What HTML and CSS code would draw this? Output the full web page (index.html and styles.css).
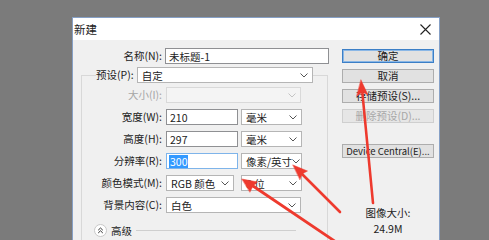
FILE: index.html
```html
<!DOCTYPE html>
<html lang="zh-CN">
<head>
    <meta charset="UTF-8">
    <title>新建</title>
    <link rel="stylesheet" href="styles.css">
</head>
<body>
    <div class="dialog">
        <div class="titlebar">
            <span class="title">新建</span>
            <svg class="close" width="11" height="11" viewBox="0 0 11 11"><path d="M0.5 0.5 L10.5 10.5 M10.5 0.5 L0.5 10.5" stroke="#222" stroke-width="1.1" fill="none"/></svg>
        </div>
        <div class="content">
            <div class="form">
                <div class="row name-row">
                    <span class="lbl lbl-outer">名称(N):</span>
                    <div class="input name-input">未标题-1</div>
                </div>
                <fieldset class="group">
                    <legend class="preset-row">
                        <span class="preset-lbl">预设(P):</span>
                        <div class="select preset"><span>自定</span><svg class="chev" width="8" height="5" viewBox="0 0 8 5"><path d="M0.5 0.5 L4 4 L7.5 0.5" stroke="#555" fill="none"/></svg></div>
                    </legend>
                    <div class="row first">
                        <span class="lbl disabled">大小(I):</span>
                        <div class="select full off"><span></span><svg class="chev" width="8" height="5" viewBox="0 0 8 5"><path d="M0.5 0.5 L4 4 L7.5 0.5" stroke="#c4c4c4" fill="none"/></svg></div>
                    </div>
                    <div class="row">
                        <span class="lbl">宽度(W):</span>
                        <div class="input num">210</div>
                        <div class="select unit"><span>毫米</span><svg class="chev" width="8" height="5" viewBox="0 0 8 5"><path d="M0.5 0.5 L4 4 L7.5 0.5" stroke="#555" fill="none"/></svg></div>
                    </div>
                    <div class="row">
                        <span class="lbl">高度(H):</span>
                        <div class="input num">297</div>
                        <div class="select unit"><span>毫米</span><svg class="chev" width="8" height="5" viewBox="0 0 8 5"><path d="M0.5 0.5 L4 4 L7.5 0.5" stroke="#555" fill="none"/></svg></div>
                    </div>
                    <div class="row">
                        <span class="lbl">分辨率(R):</span>
                        <div class="input num focus"><span class="sel">300</span></div>
                        <div class="select unit"><span>像素/英寸</span><svg class="chev" width="8" height="5" viewBox="0 0 8 5"><path d="M0.5 0.5 L4 4 L7.5 0.5" stroke="#555" fill="none"/></svg></div>
                    </div>
                    <div class="row">
                        <span class="lbl">颜色模式(M):</span>
                        <div class="select mode"><span>RGB 颜色</span><svg class="chev" width="8" height="5" viewBox="0 0 8 5"><path d="M0.5 0.5 L4 4 L7.5 0.5" stroke="#555" fill="none"/></svg></div>
                        <div class="select unit"><span>8 位</span><svg class="chev" width="8" height="5" viewBox="0 0 8 5"><path d="M0.5 0.5 L4 4 L7.5 0.5" stroke="#555" fill="none"/></svg></div>
                    </div>
                    <div class="row">
                        <span class="lbl">背景内容(C):</span>
                        <div class="select full"><span>白色</span><svg class="chev" width="8" height="5" viewBox="0 0 8 5"><path d="M0.5 0.5 L4 4 L7.5 0.5" stroke="#555" fill="none"/></svg></div>
                    </div>
                    <div class="advanced">
                        <svg class="toggle" width="13" height="13" viewBox="0 0 13 13"><circle cx="6.5" cy="6.5" r="6" fill="#fff" stroke="#c8c8c8"/><path d="M4.2 6.2 L6.5 4 L8.8 6.2 M4.2 9 L6.5 6.8 L8.8 9" stroke="#333" fill="none"/></svg>
                        <span>高级</span>
                        <span class="rule"></span>
                    </div>
                </fieldset>
            </div>
            <div class="side">
                <button class="btn default">确定</button>
                <button class="btn">取消</button>
                <button class="btn">存储预设(S)...</button>
                <button class="btn off">删除预设(D)...</button>
                <button class="btn device">Device Central(E)...</button>
                <div class="size-info">
                    <div>图像大小:</div>
                    <div class="size-val">24.9M</div>
                </div>
            </div>
        </div>
    </div>

    <svg class="marks" width="489" height="240" viewBox="0 0 489 240">
        <g fill="#ee3a2e" stroke="#ee3a2e" stroke-linecap="round">
            <line x1="373" y1="203" x2="362.4" y2="93" stroke-width="2.6"/>
            <polygon points="361,80 368,95 362.4,92 356.8,96" stroke-width="0.5"/>
            <line x1="340" y1="212" x2="302" y2="174" stroke-width="2.6"/>
            <polygon points="293,165 307.5,171 302,174 300,179.5" stroke-width="0.5"/>
            <line x1="336" y1="242" x2="253" y2="186" stroke-width="2.8"/>
            <polygon points="242,179 257.5,182 253,186 250,192" stroke-width="0.5"/>
        </g>
    </svg>
</body>
</html>
```

FILE: styles.css
```css
body {
    margin: 0;
    width: 489px;
    height: 240px;
    overflow: hidden;
    background: #7b7b7b;
    font-family: "Noto Sans CJK SC", "Noto Sans", sans-serif;
    font-size: 10.5px;
    color: #222;
    position: relative;
}
.dialog {
    margin: 17px 0 0 72px;
    width: 368px;
    height: 240px;
    box-sizing: border-box;
    border: 1px solid #86a0c6;
    background: #f0f0f0;
}
.titlebar {
    height: 22px;
    background: #fff;
    display: flex;
    align-items: center;
    justify-content: space-between;
    padding: 0 8px 0 1px;
}
.title {
    font-size: 11.5px;
    line-height: 14px;
}
.content {
    display: flex;
}
.form {
    width: 257px;
    padding-top: 8px;
}
.row {
    display: flex;
    align-items: center;
    height: 16px;
    margin-top: 6px;
}
.row.first {
    margin-top: 4px;
}
.name-row {
    margin-top: 0;
}
.lbl {
    width: 80px;
    margin-right: 4px;
    text-align: right;
    line-height: 14px;
    white-space: nowrap;
}
.lbl-outer {
    width: 89px;
    margin-right: 3px;
}
.lbl.disabled {
    color: #a6a6a6;
}
.input, .select {
    height: 16px;
    box-sizing: border-box;
    background: #fff;
    display: flex;
    align-items: center;
    line-height: 13px;
    white-space: nowrap;
}
.input {
    border: 1px solid #8f9093;
    padding-left: 3px;
}
.name-input {
    width: 164px;
}
.num {
    width: 72px;
    margin-right: 2px;
}
.focus {
    border-color: #7eb4ea;
}
.sel {
    background: #3399ff;
    color: #fff;
    padding: 0 1px;
    margin-left: -1px;
}
.select {
    border: 1px solid #b5b5b5;
    padding: 0 4px 0 4px;
    justify-content: space-between;
}
.select.off {
    background: #f4f4f4;
    border-color: #d9d9d9;
}
.preset {
    width: 176px;
    margin-left: 3px;
}
.full {
    width: 135px;
}
.unit {
    width: 61px;
    margin-left: 1px;
}
.mode {
    width: 68px;
    margin-right: 6px;
}
.chev {
    flex: none;
}
.group {
    margin: 3px 0 0 8px;
    padding: 0;
    width: 247px;
    height: 200px;
    box-sizing: border-box;
    border: 1px solid #d8d8d8;
    min-width: 0;
}
.preset-row {
    display: flex;
    align-items: center;
    padding: 0;
    margin-left: 14px;
}
.preset-lbl {
    line-height: 14px;
}
.advanced {
    display: flex;
    align-items: center;
    height: 13px;
    margin: 11px 0 0 12px;
    gap: 4px;
}
.advanced span {
    line-height: 13px;
}
.rule {
    width: 160px;
    height: 1px;
    background: #cfcfcf;
}
.side {
    display: flex;
    flex-direction: column;
    padding: 9px 0 0 12px;
    width: 92px;
}
.btn {
    width: 92px;
    height: 14px;
    margin: 0 0 6px;
    padding: 0;
    box-sizing: border-box;
    border: 1px solid #adadad;
    background: #e1e1e1;
    font-family: inherit;
    font-size: 10.5px;
    line-height: 12px;
    color: #222;
    white-space: nowrap;
    overflow: hidden;
}
.btn.default {
    border-color: #3c7fc6;
    box-shadow: inset 0 0 0 1px #8ab7e6;
}
.btn.off {
    color: #a8a8a8;
    border-color: #cfcfcf;
    background: #e6e6e6;
}
.btn.device {
    margin-top: 15px;
    font-size: 9.5px;
}
.size-info {
    margin-top: 41px;
    text-align: center;
    line-height: 16px;
}
.marks {
    position: absolute;
    top: 0;
    left: 0;
}
```
